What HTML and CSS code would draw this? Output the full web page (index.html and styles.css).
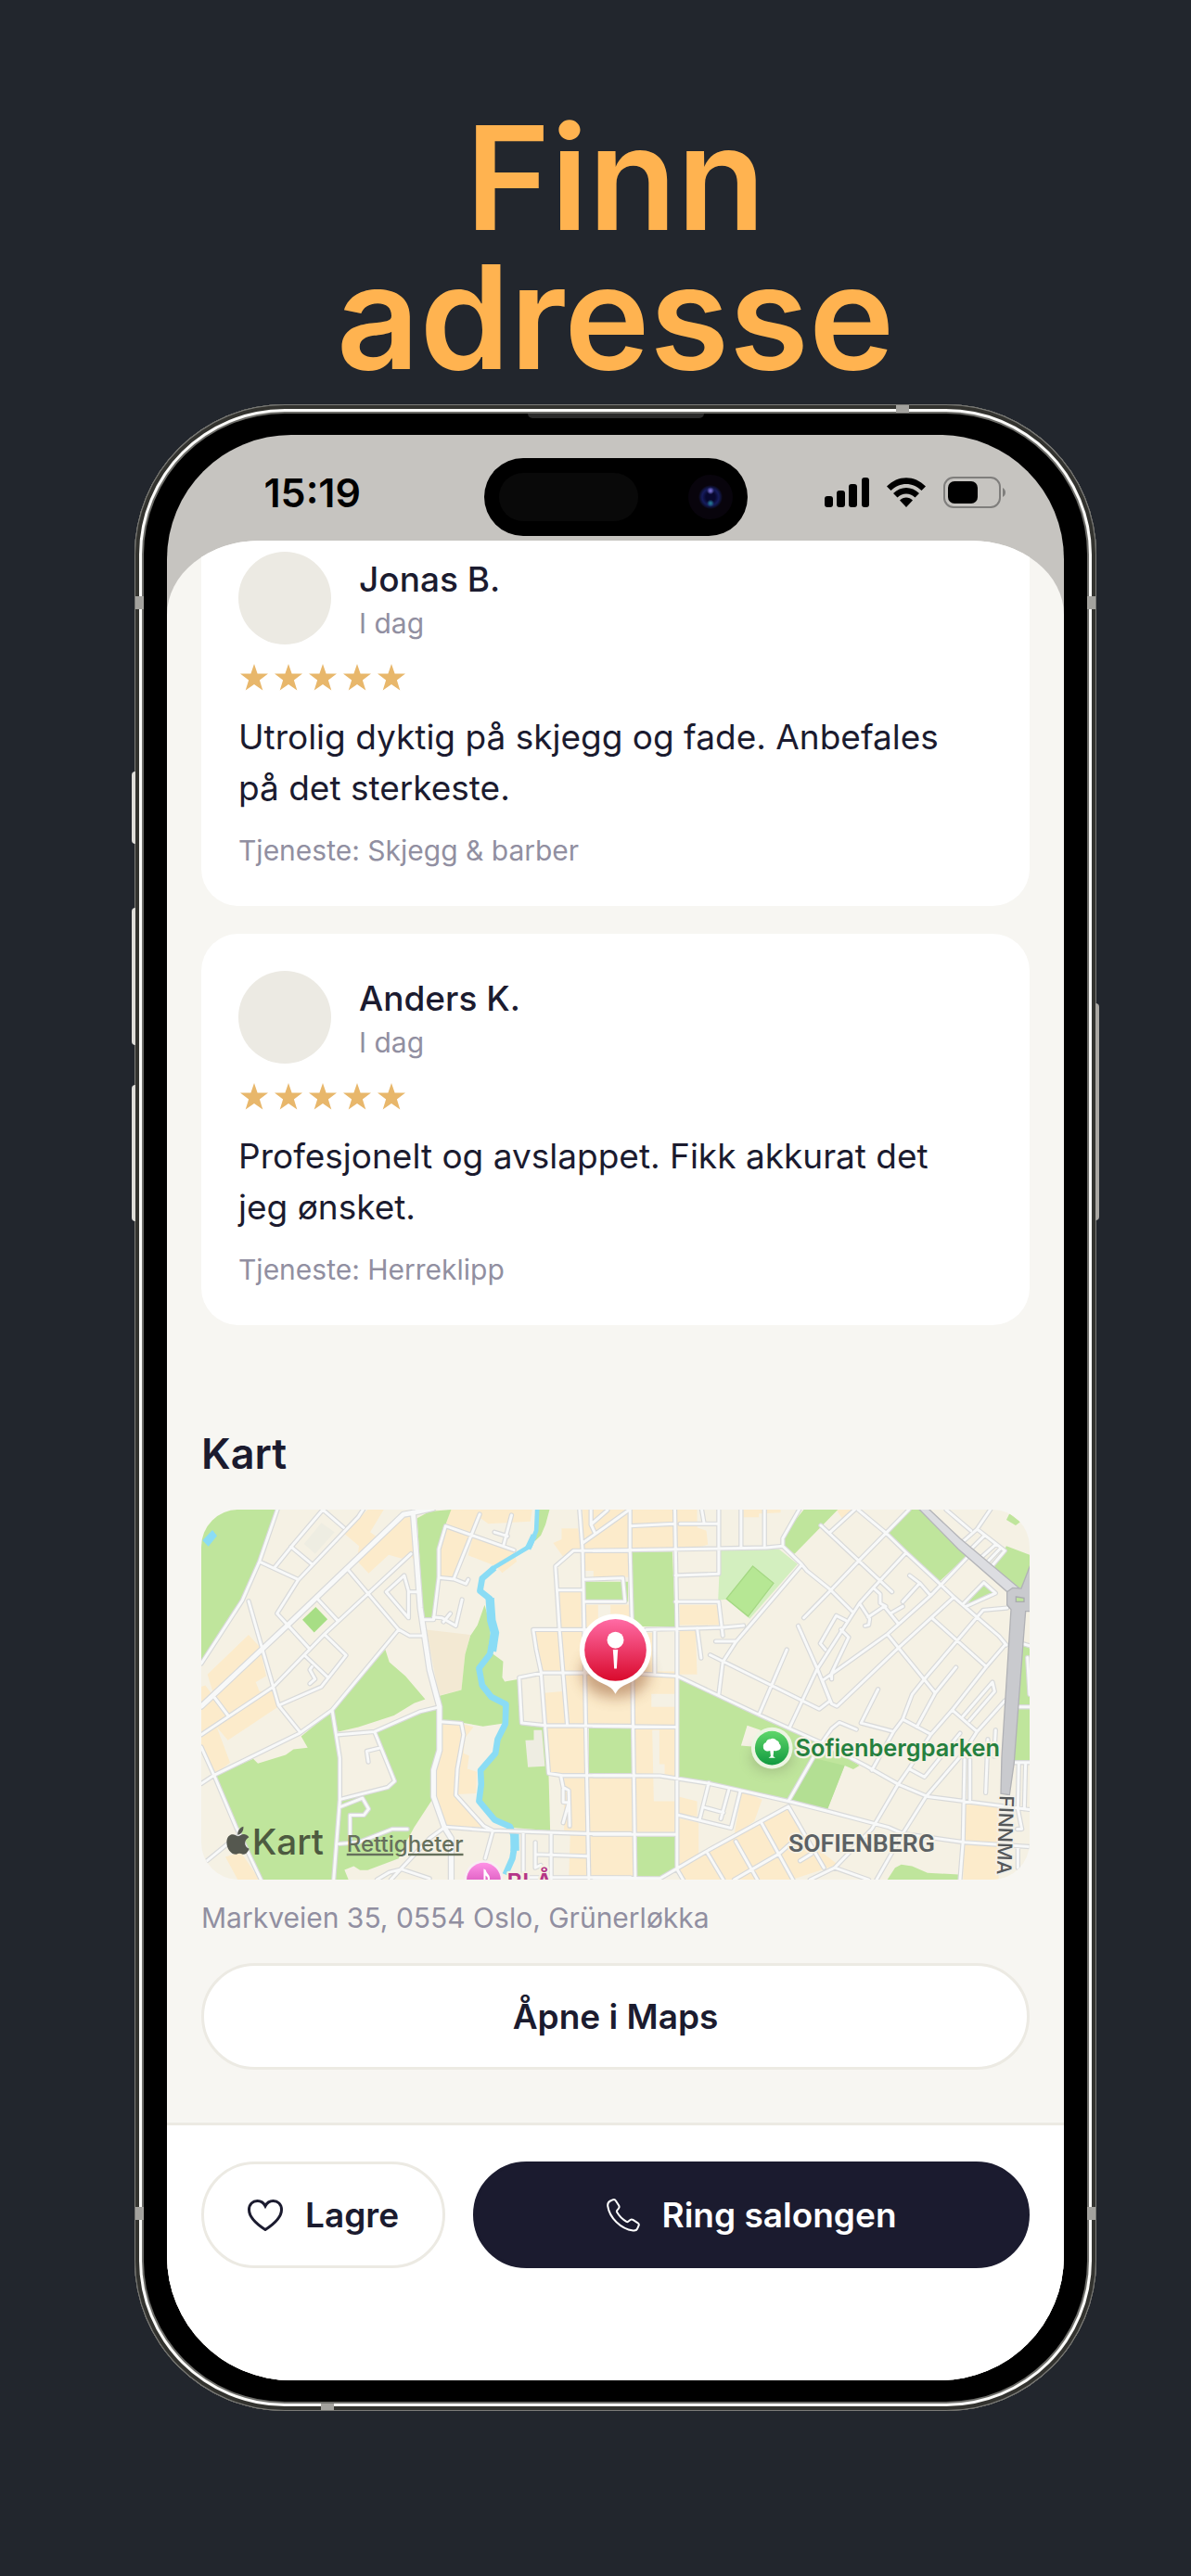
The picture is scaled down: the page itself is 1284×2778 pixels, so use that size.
FILE: index.html
```html
<!DOCTYPE html>
<html lang="nb">
<head>
<meta charset="utf-8">
<meta name="viewport" content="width=device-width, initial-scale=1">
<title>Finn adresse</title>
<link rel="stylesheet" href="styles.css">
</head>
<body>
<svg class="defs" aria-hidden="true">
  <symbol id="star" viewBox="0 0 30 29"><path d="M15 0 18.6 10.6H30L20.900 17.500 24.300 28.500 15 21.900 5.700 28.500 9.100 17.500 0 10.600H11.400Z"/></symbol>
</svg>
<main class="page">
  <h1 class="title">Finn<br>adresse</h1>
  <div class="phone">
    <span class="key key-action"></span>
    <span class="key key-up"></span>
    <span class="key key-down"></span>
    <span class="key key-power"></span>
    <span class="band band-top"></span>
    <span class="band band-bottom"></span>
    <span class="band band-left-top"></span>
    <span class="band band-left-bottom"></span>
    <span class="band band-right-top"></span>
    <span class="band band-right-bottom"></span>
    <span class="speaker"></span>
    <div class="screen">
      <header class="status">
        <time class="clock">15:19</time>
        <div class="island"><span class="sensor"></span><span class="camera"></span></div>
        <div class="signals">
          <svg width="48" height="32" viewBox="0 0 48 32" aria-hidden="true"><rect x="0" y="20" width="9" height="12" rx="3"/><rect x="13" y="14" width="9" height="18" rx="3"/><rect x="26" y="7" width="9" height="25" rx="3"/><rect x="40" y="0" width="8" height="32" rx="3"/></svg>
          <svg width="42" height="32" viewBox="0 0 42 32" aria-hidden="true"><path d="M0 9.500C12-3 30-3 42 9.500L37.500 14C28 4.500 14 4.500 4.500 14ZM7 17C15 9 27 9 35 17L30.500 21.500C25 16 17 16 11.500 21.500ZM14 24.500C18 20.500 24 20.500 28 24.500L21 32Z"/></svg>
          <svg width="68" height="34" viewBox="0 0 68 34" aria-hidden="true"><rect x="1" y="1" width="60" height="32" rx="10" fill="none" stroke="#7f7e7c" stroke-width="2"/><rect x="5" y="5" width="32" height="24" rx="7"/><path d="M64 12C68 14 68 20 64 22Z" fill="#7f7e7c"/></svg>
        </div>
      </header>
      <div class="sheet">
        <div class="content">
          <section class="reviews" aria-label="Anmeldelser">
            <article class="card">
              <div class="author">
                <span class="avatar"></span>
                <div class="who"><h3 class="name">Jonas B.</h3><p class="muted">I dag</p></div>
              </div>
              <div class="stars" role="img" aria-label="5 av 5"><svg><use href="#star"/></svg><svg><use href="#star"/></svg><svg><use href="#star"/></svg><svg><use href="#star"/></svg><svg><use href="#star"/></svg></div>
              <p class="quote">Utrolig dyktig på skjegg og fade. Anbefales på det sterkeste.</p>
              <p class="muted">Tjeneste: Skjegg &amp; barber</p>
            </article>
            <article class="card">
              <div class="author">
                <span class="avatar"></span>
                <div class="who"><h3 class="name">Anders K.</h3><p class="muted">I dag</p></div>
              </div>
              <div class="stars" role="img" aria-label="5 av 5"><svg><use href="#star"/></svg><svg><use href="#star"/></svg><svg><use href="#star"/></svg><svg><use href="#star"/></svg><svg><use href="#star"/></svg></div>
              <p class="quote">Profesjonelt og avslappet. Fikk akkurat det jeg ønsket.</p>
              <p class="muted">Tjeneste: Herreklipp</p>
            </article>
          </section>
          <section class="place">
            <h2 class="heading">Kart</h2>
            <svg class="map" viewBox="52 82 2678 1197" preserveAspectRatio="xMidYMid slice">
              <defs>
                <linearGradient id="red" x2="0" y2="1"><stop stop-color="#ff6ba5"/><stop offset="1" stop-color="#d90a2c"/></linearGradient>
                <linearGradient id="leaf" x2="0" y2="1"><stop stop-color="#5fd66a"/><stop offset="1" stop-color="#119a3f"/></linearGradient>
                <linearGradient id="pink" x2="0" y2="1"><stop stop-color="#ff92e6"/><stop offset="1" stop-color="#c53aa8"/></linearGradient>
                <filter id="soft" x="-50%" y="-50%" width="200%" height="200%"><feGaussianBlur stdDeviation="22"/></filter>
                <path id="west" d="M298 82 240 250 185 375 52 580M445 82 345 200 290 268M575 82 560 105 365 310 297 418 400 530M240 250 365 308M445 82 512 140M342 202 408 257M205 378 250 535 302 715 372 802M52 810 285 655 450 485 730 225M525 275 690 470 725 490H765M427 370 492 440M450 485 520 553 440 655 302 715M388 555 462 625M410 590 403 600 420 630 403 645M690 470 475 730 370 805 95 940 52 968M95 690 140 750M52 850 95 945 165 1110 245 1279M475 730 500 885V1020L480 1279M495 810 612 800 760 735 815 722M612 800 677 960 655 980 505 1018M632 852 587 863 592 898M505 1042 573 1015 593 1050 578 1070H533V1145M497 1163 560 1158 670 1115H718M70 1218 165 1140M838 1110 790 1145 665 1279M620 1279 660 1255 700 1245 790 1275M838 1108 990 1120 1305 1130H1440M825 768 893 773 900 810 880 920 875 1005 965 1105 995 1120 970 1210M650 348 708 295 722 345V432ZM722 348H755M770 438H803L820 300V210L842 135 1063 213M952 97 870 302M820 302 870 307 908 322 915 308M1055 100 1030 195M1000 155 1042 168M803 430 830 432 875 458 895 373M835 445 857 418M1275 82 1285 215 1290 470 1295 780 1305 1275M1440 215H1255L1197 265 1210 470 1235 775M1205 342H1285M1312 82V130L1325 158M1285 190 1432 85M1312 130 1365 84M1290 308 1415 303 1422 380H1290M1440 470H1125L1135 535 1150 605 1175 935 1220 942H1440M1440 610H1155L1080 625 1088 772 1165 780 1440 782M1215 945 1222 980 1240 990 1243 1105M1222 985V1028L1240 1030 1222 1095M1093 1130V1279M1183 1130V1279M1132 1158V1240L1150 1232M1132 1197 1300 1203M1100 1272H1440"/>
                <path id="avenue" d="M52 718 330 457 705 98 737 92 745 200 760 400 790 600 822 720V860L803 925V1010L838 1110 860 1145V1279M737 92 800 78"/>
                <path id="east" d="M0 215 560 205 612 200 672 258 690 280 765 340 835 410M612 200V175L665 82M118 82V215L125 470 128 780 135 1270M263 82 270 460V1245M118 135 260 128M280 128H405M350 82 358 128M405 82V290L265 295M477 82V205M553 82V205M265 380H405L418 490M170 470 420 463 485 457M335 465 348 562M198 470V608M130 612 270 620 545 750 735 835 880 910 985 970 1080 1010 1410 1052M0 782 265 785M0 942 215 943 375 968 475 990 630 1025 760 1058 955 1110 1000 1130 1200 1158 1410 1172M0 1132H265M0 1273 215 1275 270 1243 360 1190 630 1042 745 1240M275 1070 445 1112 475 990M373 965 343 1085M437 990 412 1082M358 1045 420 1062M270 1245 290 1279M367 1190 420 1279M460 1155 530 1279M543 1095 645 1279M455 1279 600 1195 645 1155M668 1218 705 1195M700 1279 780 1240 890 1279M780 1240 900 1115M630 1025 710 885 735 840 770 790 795 770 850 793M395 508H460M377 552 730 727 765 700 725 600 662 458M672 262 460 510 418 575 405 680M625 535 535 745M855 82 945 157 1010 220 1120 322 1165 365 1240 430 1310 490 1335 520M735 133 965 348M765 155 845 82M680 432 765 345 860 245 1020 82M635 785 722 600 860 385 905 335 1010 222M770 610 825 495 800 470M770 610V630M750 535 733 515 785 425 815 440M860 385 893 435 890 455 878 458M888 430 940 395 985 450M905 335 927 355V385L945 395M1022 295 1055 320 1090 360M1055 320 1000 380M1000 395 960 418M740 635 950 485 1090 360 1210 235M740 635 770 710 787 718 985 530 1165 365M950 485 1105 675 1045 785M1097 435 1270 590M1337 400 1260 407 1240 430 1070 630 1030 680 1000 760 970 800 900 925M865 772 970 800M865 772 920 663M1000 760 1090 808M1172 592 1105 675M1330 520 1270 590 1160 730 1090 810 1020 920 985 970 900 1115M1160 730 1240 800M1195 750 1290 640 1297 670 1215 765M1330 700 1240 800 1195 870 1075 1010 1000 1130 915 1279M1020 920 1070 947 1185 805M1200 890 1195 1150 1185 1279M1217 890V1020M1275 825 1268 998M1300 795 1295 880M1375 900 1372 1050 1385 1115H1370M1397 900 1393 1050M1355 900H1410M1372 1172V1240M1375 720H1410M1140 82 1220 150M1283 82 1240 145 1195 185M1240 145 1330 215 1290 262M1225 205 1265 165M1255 235 1300 195M1275 250 1315 208M1197 385 1262 318 1300 352 1205 395M1385 515 1410 522M1403 560 1410 680"/>
              </defs>
              <rect x="52" y="82" width="2678" height="1197" fill="#f5f1e4"/>
              <g fill="#fcebcb">
                <path d="M590 82H642L598 155 622 172 680 110 740 105 745 250 722 225 700 240 658 228 593 288 555 247 562 200 515 160ZM72 615 205 487 240 525 262 620 228 640 240 670 285 665 300 720 138 828 102 785 145 900 95 940 52 860V655L65 650 95 690ZM130 1205 180 1190 240 1279H170ZM858 82H1122L1116 120 980 128 955 110 870 300 822 303V210L842 135ZM930 170 1060 215 1072 250 1025 287 1005 265 915 230ZM827 770 895 775 932 785 905 820 900 870 918 878 912 920 943 930 940 1000 875 1003 965 1110 830 1105 805 1015V920L825 860ZM1217 143H1270L1280 215 1220 232 1190 190 1217 178ZM1285 82H1440V280H1290ZM1210 347H1280V470H1215ZM1292 390H1440V470H1292ZM1130 478H1210L1215 605H1150ZM1215 478H1440V780H1240ZM1160 675 1220 670 1232 775H1165ZM1172 785H1300V937H1180ZM1225 950H1300V1279H1240L1245 1130 1225 1135ZM1305 945H1440V1275H1305Z"/>
                <path transform="translate(1320)" d="M0 82H335V140L365 150 370 195 335 205H0ZM0 225H115V300H0ZM0 390H120V470H0ZM278 390H405V455H278ZM278 475H330L335 615H278ZM0 480H265V780H0ZM135 790H265V950H135ZM0 950H265V1125H0ZM0 1135H130V1270H0ZM275 1010 335 1025V1075L275 1065ZM480 990 545 1020 520 1090 455 1135ZM275 1240 630 1045 700 1160 790 1230 640 1279H290ZM275 1080 340 1095V1200L275 1235ZM1200 1035 1310 1045V1279H1195ZM485 82H605V92L535 95V107H485ZM785 82H835L805 112Z"/>
              </g>
              <path fill="#f5f1e4" transform="translate(1320)" d="M187 678H265V720H187ZM190 795H213V905H230V950L265 955V1025H195ZM15 390H55V440H15ZM200 475H265V605H200Z"/>
              <path fill="#f3e9d3" d="M780 470 922 487 905 550 893 665 820 683Z"/>
              <g fill="#bfe59c">
                <path d="M52 82H292L238 250 185 375 52 580ZM647 535 660 575 712 620 776 695 740 708 675 748 560 785 495 800 475 735ZM95 942 220 888 235 903 325 875 350 857 396 852 375 815 470 738 492 810 612 800 760 735 815 722 825 770V860L802 925V1015L740 1110 710 1165 690 1210 590 1248H565L545 1235 515 1247 528 1279H245L165 1120ZM750 110 790 88 860 82 840 135 818 210V300L800 435 770 437ZM968 390 985 450 990 545 1028 573 1025 625 1033 638 1080 630 1088 772 1165 780 1175 940 1180 1120 1050 1110 990 1075 945 1030 960 915 1003 870V830L1030 773 963 783 900 772 827 765 820 685 893 665 905 550 922 490 945 455ZM1143 82H1178L1165 130 1150 165 1130 185ZM1292 315H1432V380H1292ZM1305 785H1447V938H1305Z"/>
                <path transform="translate(1320)" d="M123 220 255 218 265 460H130ZM140 1140H265V1240L215 1268H140ZM680 82H790L650 225 612 195 625 150ZM1015 82H1060L1185 210 1208 230 1120 313 948 157ZM1345 95 1380 122 1365 133 1335 115ZM1335 200 1410 228V270L1385 335 1360 332 1295 270ZM275 625 545 750 740 835 860 910 840 922 812 910 755 1055 630 1025 470 985 275 950ZM950 1279 975 1240 995 1230 1030 1235 1080 1257 1180 1262V1279ZM1385 520 1410 530V895H1355ZM1262 320 1292 350 1205 392Z"/>
              </g>
              <path fill="#f5f1e4" d="M495 812 612 802 677 960 655 978 505 1015ZM1817 780 1860 795 1850 850 1797 845Z"/>
              <path fill="#a7de85" d="M422 397 460 437 417 479 379 438Z"/>
              <path fill="#eeede2" d="M1127 795H1153L1163 912 1108 915 1100 828 1127 827ZM440 125 483 155 420 225 384 193Z"/>
              <path fill="#b3df93" d="M2030 885 2132 910 2075 1055 1950 1025Z"/>
              <path fill="#d3efbf" d="M1730 212 1920 210 1980 258 1825 435 1750 372 1723 375Z"/>
              <path fill="#b6e794" stroke="#a5d884" stroke-width="4" d="M1835 265 1902 320 1820 427 1750 370Z"/>
              <path fill="#8adcf5" d="M88 148 103 167 75 201 56 182Z"/>
              <path fill="none" stroke="#8adcf5" stroke-width="14" d="M1138 82 1135 150 1115 200 1060 233 990 275"/>
              <path fill="none" stroke="#8adcf5" stroke-width="20" stroke-linejoin="round" d="M1128 165 1108 208M1000 270 960 305 953 345 985 370 992 450 1000 475 985 550 950 595 960 650 990 688 1037 712 1035 775 1010 825 1003 870 955 925 957 970 950 1025 1000 1085 1050 1107 1068 1150 1058 1210 1035 1262"/>
              <path fill="none" stroke="#8adcf5" stroke-width="28" d="M985 368 990 440 1001 480 992 540M1065 1130 1066 1185"/>
              <g fill="none" stroke-linecap="round" stroke-linejoin="round">
                <g stroke="#d8d9d9" stroke-width="16"><use href="#west"/><use href="#east" x="1320"/></g>
                <use href="#avenue" stroke="#d8d9d9" stroke-width="22"/>
                <g stroke="#f8f9f9" stroke-width="9"><use href="#west"/><use href="#east" x="1320"/></g>
                <use href="#avenue" stroke="#f8f9f9" stroke-width="15"/>
              </g>
              <path fill="#dcdde1" stroke="#b4b5b9" stroke-width="4" d="M2370 78H2402L2505 175 2695 335 2660 350 2500 210Z"/>
              <path fill="#c9cace" stroke="#b1b2b6" stroke-width="4" d="M2657 348 2675 335 2703 337 2732 262V411H2717L2710 500 2680 900 2665 1005 2637 1000 2640 880 2670 405 2657 390Z"/>
              <path fill="#bfe59c" stroke="#a9aaae" stroke-width="4" d="M2686 364 2712 368V380H2686Z"/>
              <ellipse cx="1391" cy="610" rx="110" ry="80" fill="#8a4a20" opacity=".45" filter="url(#soft)"/>
              <path fill="#fff" d="M1391 678C1380 655 1362 650 1345 642A116 116 0 1 1 1437 642C1420 650 1402 655 1391 678Z"/>
              <circle cx="1391" cy="536" r="100" fill="url(#red)"/>
              <circle cx="1391" cy="504" r="27" fill="#fff"/><path fill="#fff" d="M1383 535H1399L1395 596H1387Z"/>
              <ellipse cx="1897" cy="885" rx="66" ry="40" fill="#554" opacity=".3" filter="url(#soft)"/>
              <circle cx="1897" cy="853" r="67" fill="#edf5e3"/><circle cx="1897" cy="853" r="55" fill="url(#leaf)"/>
              <path fill="#fff" d="M1891 862C1880 866 1868 860 1869 849 1868 840 1875 836 1878 835 1880 825 1888 824 1892 824 1900 819 1909 824 1912 829 1920 831 1920 837 1921 840 1929 846 1927 860 1914 861 1909 864 1904 862 1903 862L1901 880 1908 885H1886L1893 880Z"/>
              <circle cx="965" cy="1279" r="63" fill="#f8eef3"/><circle cx="965" cy="1279" r="55" fill="url(#pink)"/>
              <path fill="#fff" d="M965 1243 972 1248C975 1262 988 1263 984 1280H978C980 1270 974 1268 971 1265V1280H965Z"/>
              <g class="labels">
                <text class="poi park" x="1973" y="880">Sofienbergparken</text>
                <text class="poi club" x="1040" y="1314">BLÅ</text>
                <text class="district" x="1950" y="1188">SOFIENBERG</text>
                <text class="street" transform="translate(2633 1006) rotate(92)">FINNMA</text>
                <text class="brand" x="216" y="1198">Kart</text>
                <a href="#rettigheter"><text class="legal" x="522" y="1188">Rettigheter</text></a>
              </g>
              <path fill="#55584f" d="M188 1107C190 1120 180 1133 170 1134 168 1122 177 1110 188 1107ZM171 1138C177 1138 182 1131 192 1132 198 1133 203 1136 206 1141 188 1152 190 1172 207 1179 201 1193 194 1198 186 1197 178 1193 172 1193 166 1197 148 1199 134 1178 134 1158 134 1134 152 1128 163 1135Z"/>
            </svg>
            <p class="muted address">Markveien 35, 0554 Oslo, Grünerløkka</p>
            <button type="button" class="btn btn-light btn-wide">Åpne i Maps</button>
          </section>
        </div>
        <footer class="actions">
          <button type="button" class="btn btn-light btn-save">
            <svg width="38" height="34" viewBox="0 0 38 34" aria-hidden="true"><path d="M19 32.500C12 28 1.500 20 1.500 11 1.500 5 5.500 1.500 10.500 1.500 14.500 1.500 17.500 4 19 7 20.500 4 23.500 1.500 27.500 1.500 32.500 1.500 36.500 5 36.500 11 36.500 20 26 28 19 32.500Z"/></svg>
            Lagre
          </button>
          <button type="button" class="btn btn-dark btn-call">
            <svg width="36" height="36" viewBox="0 0 36 36" aria-hidden="true"><path d="M4 2.500 7 1.200C8.300.8 9.200 1.200 9.800 2.200L13.200 7.500C13.800 8.600 13.700 9.600 13 10.500L11.200 12.800C10.800 13.400 10.800 14 11.100 14.600 13.500 18.800 17 22.400 21.400 24.900 22 25.200 22.700 25.200 23.200 24.800L25.500 23C26.400 22.300 27.400 22.300 28.400 22.900L33.700 26.300C34.700 27 35.100 27.900 34.600 29L33.500 31.700C32.800 33.700 31 34.800 28.500 34.500 15 32.500 3 20.500 1.200 8 .9 5.300 2 3.500 4 2.500Z"/></svg>
            Ring salongen
          </button>
        </footer>
      </div>
    </div>
  </div>
</main>
</body>
</html>
```
FILE: styles.css
```css
* { box-sizing: border-box; margin: 0; }

body {
  background: #22262d;
  color: #1b1b2f;
  font-family: Inter, "Liberation Sans", sans-serif;
}

.defs { display: none; }

.page {
  min-height: 100vh;
  padding: 117px 102px 178px 145px;
}

.title {
  margin-bottom: 19px;
  color: #ffb350;
  font-size: 156px;
  font-weight: 600;
  line-height: 150px;
  text-align: center;
}

/* Device frame */
.phone {
  position: relative;
  padding: 33px 35px;
  border-radius: 162px;
  background: #000;
  box-shadow:
    inset 0 0 0 1px #7b7b77,
    inset 0 0 0 5px #33332f,
    inset 0 0 0 8px #fbfbf9,
    inset 0 0 0 10px #6d6d69;
}

.key {
  position: absolute;
  left: -3px;
  width: 4px;
  border-radius: 4px 0 0 4px;
  background: #deddd8;
}
.key-action { top: 396px; height: 78px; }
.key-up { top: 543px; height: 148px; }
.key-down { top: 734px; height: 147px; }
.key-power {
  top: 646px;
  right: -3px;
  left: auto;
  height: 234px;
  border-radius: 0 4px 4px 0;
  background: #a9a6a1;
}

.band { position: absolute; background: #a3a29e; }
.band-top { top: 1px; right: 202px; width: 14px; height: 8px; }
.band-bottom { bottom: 1px; left: 201px; width: 14px; height: 7px; }
.band-left-top, .band-left-bottom { left: 1px; width: 9px; height: 14px; }
.band-right-top, .band-right-bottom { right: 1px; width: 9px; height: 14px; }
.band-left-top, .band-right-top { top: 207px; }
.band-left-bottom, .band-right-bottom { bottom: 206px; }

.speaker {
  position: absolute;
  top: 10px;
  left: 50%;
  width: 190px;
  height: 5px;
  margin-left: -95px;
  border-radius: 0 0 5px 5px;
  background: #2a2a2a;
}

.screen {
  overflow: hidden;
  border-radius: 134px;
  background: #c6c4c0;
}

/* Status bar */
.status {
  display: grid;
  grid-template-columns: 1fr 284px 1fr;
  align-items: center;
  height: 114px;
  padding-top: 20px;
}

.clock {
  padding-right: 28px;
  padding-bottom: 10px;
  color: #000;
  font-size: 43px;
  font-weight: 600;
  line-height: 50px;
  text-align: center;
}

.island {
  display: flex;
  align-items: center;
  justify-content: space-between;
  height: 84px;
  padding: 0 16px;
  border-radius: 42px;
  background: #000;
}
.sensor { width: 150px; height: 52px; border-radius: 26px; background: #090909; }
.camera {
  width: 48px;
  height: 48px;
  border-radius: 50%;
  background:
    radial-gradient(circle at 50% 36%, #6f68c8 0 1px, transparent 4px),
    radial-gradient(circle at 50% 64%, #22708f 0 1px, transparent 4px),
    radial-gradient(circle, #07072e 0 5px, #151b5c 9px, #0f1238 11px, #08040c 13px);
}

.signals {
  display: flex;
  align-items: center;
  justify-content: center;
  gap: 19px;
  padding-bottom: 10px;
  padding-left: 21px;
}

/* Sheet */
.sheet {
  overflow: hidden;
  border-radius: 100px 100px 0 0 / 80px 80px 0 0;
  background: #f7f6f2;
}

.content { padding: 0 37px 57px; }

.reviews {
  display: flex;
  flex-direction: column;
  gap: 30px;
  margin-top: -28px;
}

.card {
  padding: 40px;
  border-radius: 40px;
  background: #fff;
}

.author { display: flex; align-items: center; gap: 30px; }
.avatar { width: 100px; height: 100px; border-radius: 50%; background: #eceae3; }
.who { display: flex; flex-direction: column; gap: 4px; padding-top: 4px; }
.name { font-size: 37px; font-weight: 500; line-height: 46px; }
.muted { color: #918fa1; font-size: 30px; line-height: 40px; }

.stars { display: flex; gap: 7px; margin: 21px 0 22px; padding-left: 2px; }
.stars svg { width: 30px; height: 29px; fill: #e8b76b; }

.quote {
  margin-bottom: 20px;
  padding-right: 16px;
  font-size: 37px;
  line-height: 55px;
}

.place { margin-top: 109px; }
.heading { margin-bottom: 30px; font-size: 45px; font-weight: 600; line-height: 60px; }

.map { display: block; width: 100%; border-radius: 40px; }
.labels { paint-order: stroke; stroke-linejoin: round; }
.poi { font-size: 76px; font-weight: 600; stroke: #f5f1e4; stroke-width: 14px; }
.park { fill: #25803e; }
.club { fill: #b53586; }
.district {
  fill: #5c6164;
  stroke: #f5f1e4;
  stroke-width: 10px;
  font-family: "Liberation Sans Narrow", Roboto, sans-serif;
  font-size: 80px;
  font-weight: 600;
}
.street { fill: #55585a; stroke: #f1efe8; stroke-width: 10px; font-size: 64px; font-weight: 500; }
.brand { fill: #4d5a40; font-size: 116px; font-weight: 500; }
.legal { fill: #66705c; font-size: 72px; font-weight: 500; text-decoration: underline; }

.address { margin: 21px 0 29px; }

/* Buttons */
.btn {
  display: flex;
  align-items: center;
  justify-content: center;
  gap: 24px;
  height: 115px;
  padding: 0 47px;
  border: 3px solid #eceae3;
  border-radius: 58px;
  font: 600 37px/48px Inter, "Liberation Sans", sans-serif;
}
.btn svg { fill: none; stroke: currentColor; stroke-width: 2px; }
.btn-save svg { stroke-width: 3px; }
.btn-light { background: #fff; color: #1b1b2f; }
.btn-dark { border-color: #1b1b2f; background: #1b1b2f; color: #fff; }
.btn-wide { width: 100%; }
.btn-call { flex: 1; }

.actions {
  display: flex;
  gap: 30px;
  padding: 39px 37px 121px;
  border-top: 3px solid #eceae3;
  background: #fff;
}
```
